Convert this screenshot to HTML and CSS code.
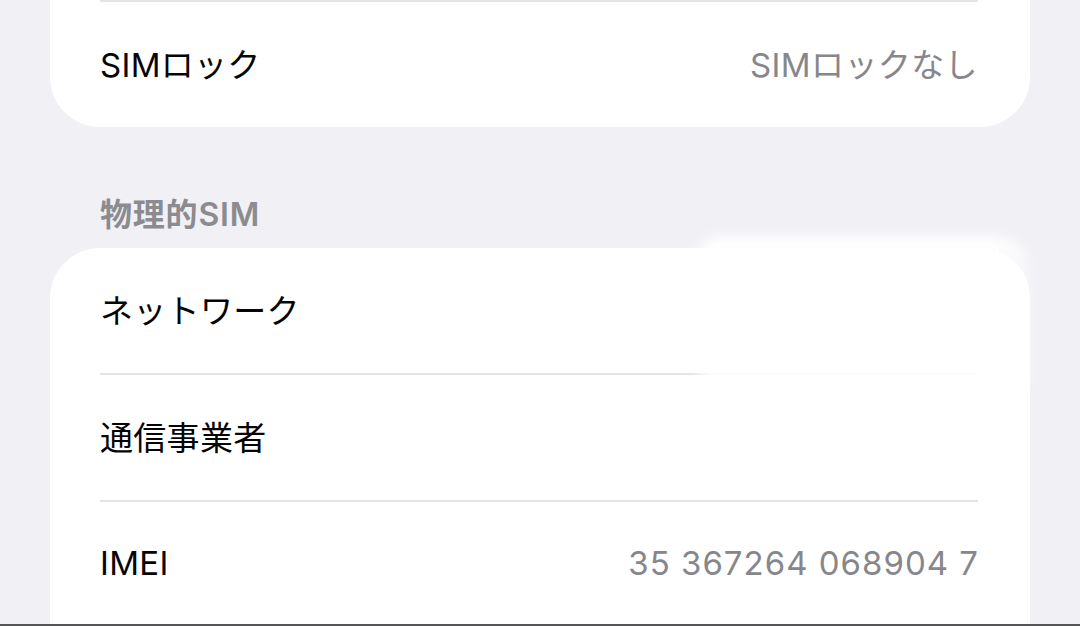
FILE: index.html
```html
<!DOCTYPE html>
<html lang="ja">
<head>
<meta charset="utf-8">
<link rel="stylesheet" href="styles.css">
</head>
<body>
<div class="screen">
  <div class="card card-top">
    <div class="sep"></div>
    <div class="row">
      <span class="label">SIMロック</span>
      <span class="value">SIMロックなし</span>
    </div>
  </div>
  <div class="section-header">物理的SIM</div>
  <div class="card card-bottom">
    <div class="row">
      <span class="label">ネットワーク</span>
    </div>
    <div class="sep sep-short"></div>
    <div class="row">
      <span class="label">通信事業者</span>
    </div>
    <div class="sep"></div>
    <div class="row">
      <span class="label">IMEI</span>
      <span class="value value-num">35 367264 068904 7</span>
    </div>
  </div>
  <div class="glare"></div>
</div>
<div class="bottom-line"></div>
</body>
</html>
```
FILE: styles.css
```css
html, body {
  margin: 0;
  padding: 0;
  background: #f1f0f5;
  width: 1080px;
  height: 626px;
  overflow: hidden;
}
body {
  font-family: "Inter", "Noto Sans CJK JP", sans-serif;
  color: #000;
  -webkit-font-smoothing: antialiased;
}
.screen {
  position: relative;
  padding: 0 50px;
  height: 624px;
}
.card {
  background: #fff;
  padding-left: 50px;
  padding-right: 52px;
}
.card-top {
  border-radius: 0 0 50px 50px;
}
.card-bottom {
  border-radius: 50px 50px 0 0;
  height: 376px;
}
.sep {
  height: 2px;
  background: #e4e4e6;
}
.row {
  height: 125px;
  display: flex;
  align-items: center;
  justify-content: space-between;
  font-size: 33px;
  padding-bottom: 3px;
  box-sizing: border-box;
}
.label {
  color: #050505;
  letter-spacing: 0.3px;
}
.value {
  color: #87878b;
  letter-spacing: 0.4px;
}
.value-num {
  letter-spacing: 1px;
  margin-right: -1px;
}
.section-header {
  height: 121px;
  box-sizing: border-box;
  padding: 68px 0 0 50px;
  font-size: 32px;
  font-weight: 600;
  letter-spacing: 0.8px;
  color: #8b8b90;
  line-height: 40px;
}
.glare {
  position: absolute;
  left: 690px;
  top: 236px;
  width: 345px;
  height: 150px;
  background: linear-gradient(90deg, rgba(255,255,255,0) 0%, #fff 6%, #fff 88%, rgba(255,255,255,0.6) 96%, rgba(255,255,255,0) 100%);
  border-radius: 30px 40px 20px 20px;
  filter: blur(5px);
  opacity: 0.95;
  pointer-events: none;
}
.bottom-line {
  height: 2px;
  background: #555558;
}
```
